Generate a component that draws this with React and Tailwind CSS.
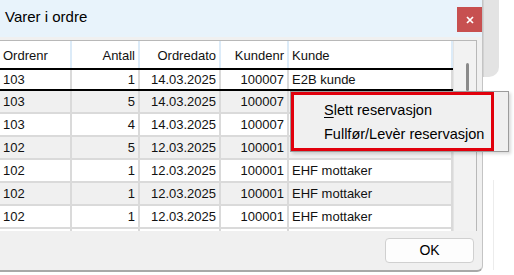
const rows = [
  ["103", "1", "14.03.2025", "100007", "E2B kunde"],
  ["103", "5", "14.03.2025", "100007", "E2B kunde"],
  ["103", "4", "14.03.2025", "100007", "E2B kunde"],
  ["102", "5", "12.03.2025", "100001", "EHF mottaker"],
  ["102", "1", "12.03.2025", "100001", "EHF mottaker"],
  ["102", "1", "12.03.2025", "100001", "EHF mottaker"],
  ["102", "1", "12.03.2025", "100001", "EHF mottaker"],
];

const headers = ["Ordrenr", "Antall", "Ordredato", "Kundenr", "Kunde"];

// width + alignment per column, written out in full
const cols = [
  "w-[72px] justify-start pl-[3px]",
  "w-[68px] justify-end pr-[3px]",
  "w-[81px] justify-end pr-[3px]",
  "w-[68px] justify-end pr-[3px]",
  "w-[164px] justify-start pl-[3px]",
];

function Row({ cells, index }) {
  const selected = index === 0;
  const shade = index % 2 === 1 ? "bg-[#f0f0f0]" : "bg-white";
  const frame = selected
    ? "h-[23px] border-y-2 border-black bg-white"
    : `h-[23px] border-b-2 border-[#dadada] ${shade}`;
  return (
    <div className={`flex ${frame}`}>
      {cells.map((c, i) => (
        <div key={i} className={`flex items-center border-r-2 border-[#dadada] whitespace-nowrap ${cols[i]}`}>
          {c}
        </div>
      ))}
    </div>
  );
}

export default function App() {
  return (
    <div className="relative flex h-[275px] w-[514px] overflow-hidden bg-white text-[13px] text-[#111] [font-family:'Liberation_Sans',Arial,sans-serif]">
      <div className="flex h-[272px] w-[483px] shrink-0 flex-col rounded-br-[6px] border-r border-b-2 border-r-[#c4c4c4] border-b-[#a8a8a8] bg-[#f0f0f0]">
        <div className="flex h-[37px] items-start justify-between bg-[#e8f3fb]">
          <span className="mt-[8px] pl-[5px] text-[15px] leading-[18px] text-black">Varer i ordre</span>
          <div className="mt-[7px] flex h-[25px] w-[25px] items-center justify-center bg-[#c75050]">
            <svg width="8" height="8" viewBox="0 0 8 8">
              <path d="M1 1L7 7M7 1L1 7" stroke="white" strokeWidth="1.7" />
            </svg>
          </div>
        </div>

        <div className="pt-[3px] pr-[5px]">
          <div className="flex border-t border-r border-[#b8b8b8]">
            <div className="flex w-[453px] flex-col">
              <div className="flex h-[27px] bg-white">
                {headers.map((h, i) => (
                  <div key={h} className={`flex items-center pt-[2px] border-r-2 border-[#dcebf8] ${cols[i]}`}>
                    {h}
                  </div>
                ))}
              </div>
              {rows.map((r, i) => (
                <Row key={i} cells={r} index={i} />
              ))}
              <div className="flex h-[2px] bg-white">
                {cols.map((c, i) => (
                  <div key={i} className={`border-r-2 border-[#dadada] ${c}`} />
                ))}
              </div>
            </div>
            <div className="w-[23px] border-l border-[#e4e4e4] bg-[#f2f2f2]">
              <div className="mt-[22px] ml-[12px] h-[28px] w-[3px] rounded-full bg-[#8a8a8a]" />
            </div>
          </div>
        </div>

        <div className="flex flex-1 justify-end pt-[7px] pr-[8px]">
          <button className="h-[25px] w-[89px] rounded-[4px] border border-[#d0d0d0] bg-[#fdfdfd] text-[14px] text-black">
            OK
          </button>
        </div>
      </div>

      <div className="flex flex-1 flex-col">
        <div className="h-[77px] w-[16px] rounded-br-[10px] border-l border-[#d2d2d2] bg-[#e3e3e3]" />
        <div className="ml-[10px] mt-[103px] h-[90px] border-l border-[#ececec]" />
      </div>

      <div className="absolute left-[290px] top-[91px] h-[61px] w-[219px] border border-[#9c9c9c] bg-[#f0f0f0] text-[14.5px] text-black shadow-[2px_2px_3px_rgba(0,0,0,0.15)]">
        <div className="absolute left-0 top-0 h-[59px] w-[203px] border-[3px] border-[#e1000c]" />
        <div className="flex flex-col pt-[6px] pl-[33px]">
          <div className="h-[24px] leading-[24px]">
            <span className="underline underline-offset-2">S</span>lett reservasjon
          </div>
          <div className="h-[24px] leading-[24px]">Fullfør/Levèr reservasjon</div>
        </div>
      </div>
    </div>
  );
}
